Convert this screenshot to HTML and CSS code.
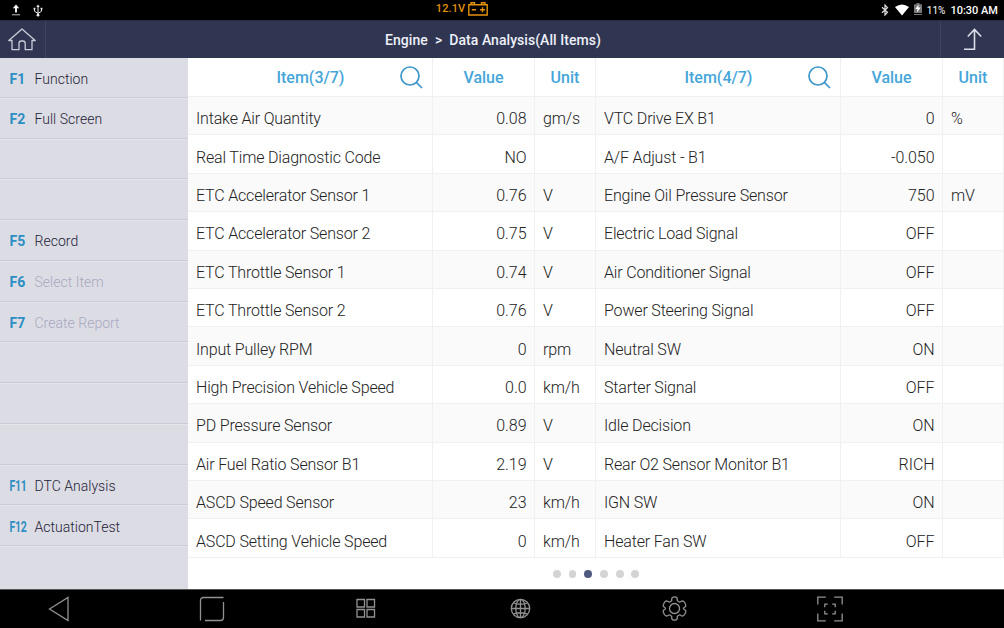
FILE: index.html
```html
<!DOCTYPE html>
<html lang="en">
<head>
<meta charset="utf-8">
<title>Data Analysis</title>
<link rel="stylesheet" href="styles.css">
</head>
<body>
<div class="screen">
  <div class="status">
    <div class="status-left">
      <svg width="10" height="12" viewBox="0 0 10 12"><path d="M5 8.500V3" stroke="#fff" stroke-width="1.800"/><path d="M1.800 4.300 5 .6l3.200 3.700z" fill="#fff"/><path d="M1 10.800h8" stroke="#bbb" stroke-width="1"/></svg>
      <svg width="10" height="13" viewBox="0 0 10 13" fill="none" stroke="#eee"><path d="M5 2v9M1.500 5v2.200L5 9.500l3.500-2.300V5"/><path d="M3.300 3 5 .5 6.700 3zM.6 3.800h1.800v1.800H.6zM7.600 3.800h1.800v1.800H7.600z" fill="#eee" stroke="none"/><circle cx="5" cy="11.200" r="1.400" fill="#eee" stroke="none"/></svg>
    </div>
    <div class="voltage"><span>12.1V</span><svg width="20" height="14" viewBox="0 0 20 14" fill="none" stroke="#e3920b" stroke-width="1.400"><path d="M.8 2.800h18.400v10.200H.8zM3 2.500V.8h3.500v1.700M13.500 2.500V.8H17v1.700M3.700 7.800H8M12 7.800h5M14.500 5.300v5"/></svg></div>
    <div class="status-right">
      <svg width="8" height="12" viewBox="0 0 8 12" fill="none" stroke="#ddd" stroke-width="1.200"><path d="m1 3.200 5.500 5L4 11V1l2.500 2.700L1 8.800"/></svg>
      <svg class="wifi" width="14" height="12" viewBox="0 0 14 12"><path d="M0 3Q7-2.200 14 3L7 11.500z" fill="#fff"/></svg>
      <svg class="battery" width="8" height="12" viewBox="0 0 8 12"><path d="M2.500 0h3v1.200H8V10H0V1.200h2.500zM0 11h8v1H0z" fill="#777"/><path d="M4.600 1.500 1.300 6h2.200L2.900 9.500l3.800-5H4.400z" fill="#fff"/></svg>
      <span class="percent">11%</span><span class="clock">10:30 AM</span>
    </div>
  </div>
  <header class="titlebar">
    <div class="home"><svg width="28" height="23" viewBox="0 0 28 23" fill="none" stroke="#c9ccd9" stroke-width="1.300" stroke-linejoin="round"><path d="M4 12.500H.8L14 1l13.200 11.500H24v9.200h-6.800v-6.400q0-2.300-2.300-2.300h-1.600q-2.300 0-2.300 2.300v6.400H4z"/></svg></div>
    <h1>Engine&nbsp; &gt;&nbsp; Data Analysis(All Items)</h1>
    <div class="up"><svg width="19" height="23" viewBox="0 0 19 23" fill="none" stroke="#dcdee8" stroke-width="1.600"><path d="M1 21.200h10.500V2M4.800 8.500l6.700-7 6.700 7"/></svg></div>
  </header>
  <main class="body">
    <nav class="side">
      <div class="fn"><b>F1</b><span>Function</span></div>
      <div class="fn"><b>F2</b><span>Full Screen</span></div>
      <div class="fn"></div>
      <div class="fn"></div>
      <div class="fn"><b>F5</b><span>Record</span></div>
      <div class="fn off"><b>F6</b><span>Select Item</span></div>
      <div class="fn off"><b>F7</b><span>Create Report</span></div>
      <div class="fn"></div>
      <div class="fn"></div>
      <div class="fn"></div>
      <div class="fn wide"><b>F11</b><span>DTC Analysis</span></div>
      <div class="fn wide"><b>F12</b><span>ActuationTest</span></div>
    </nav>
    <section class="data">
      <div class="row head"><div class="item"><span>Item(3/7)</span><svg width="23" height="23" viewBox="0 0 23 23" fill="none" stroke="#3f97c9" stroke-width="1.700"><circle cx="10" cy="10" r="9"/><path d="m16.300 16.300 5.700 5.700"/></svg></div><div>Value</div><div>Unit</div><div class="item"><span>Item(4/7)</span><svg width="23" height="23" viewBox="0 0 23 23" fill="none" stroke="#3f97c9" stroke-width="1.700"><circle cx="10" cy="10" r="9"/><path d="m16.300 16.300 5.700 5.700"/></svg></div><div>Value</div><div>Unit</div></div>
      <div class="row"><div>Intake Air Quantity</div><div class="val">0.08</div><div>gm/s</div><div>VTC Drive EX B1</div><div class="val">0</div><div>%</div></div>
      <div class="row"><div>Real Time Diagnostic Code</div><div class="val">NO</div><div></div><div>A/F Adjust - B1</div><div class="val">-0.050</div><div></div></div>
      <div class="row"><div>ETC Accelerator Sensor 1</div><div class="val">0.76</div><div>V</div><div>Engine Oil Pressure Sensor</div><div class="val">750</div><div>mV</div></div>
      <div class="row"><div>ETC Accelerator Sensor 2</div><div class="val">0.75</div><div>V</div><div>Electric Load Signal</div><div class="val">OFF</div><div></div></div>
      <div class="row"><div>ETC Throttle Sensor 1</div><div class="val">0.74</div><div>V</div><div>Air Conditioner Signal</div><div class="val">OFF</div><div></div></div>
      <div class="row"><div>ETC Throttle Sensor 2</div><div class="val">0.76</div><div>V</div><div>Power Steering Signal</div><div class="val">OFF</div><div></div></div>
      <div class="row"><div>Input Pulley RPM</div><div class="val">0</div><div>rpm</div><div>Neutral SW</div><div class="val">ON</div><div></div></div>
      <div class="row"><div>High Precision Vehicle Speed</div><div class="val">0.0</div><div>km/h</div><div>Starter Signal</div><div class="val">OFF</div><div></div></div>
      <div class="row"><div>PD Pressure Sensor</div><div class="val">0.89</div><div>V</div><div>Idle Decision</div><div class="val">ON</div><div></div></div>
      <div class="row"><div>Air Fuel Ratio Sensor B1</div><div class="val">2.19</div><div>V</div><div>Rear O2 Sensor Monitor B1</div><div class="val">RICH</div><div></div></div>
      <div class="row"><div>ASCD Speed Sensor</div><div class="val">23</div><div>km/h</div><div>IGN SW</div><div class="val">ON</div><div></div></div>
      <div class="row"><div>ASCD Setting Vehicle Speed</div><div class="val">0</div><div>km/h</div><div>Heater Fan SW</div><div class="val">OFF</div><div></div></div>
      <div class="pager"><i></i><i></i><i class="on"></i><i></i><i></i><i></i></div>
    </section>
  </main>
  <footer class="navbar">
    <svg width="26" height="26" viewBox="0 0 26 26"><path d="M3.500 13 22 1.500v23z"/></svg>
    <svg width="26" height="26" viewBox="0 0 26 26"><path d="M1.500 24.500v-20q0-3 3-3h20M24.500 6v15.500q0 3-3 3H6"/></svg>
    <svg width="26" height="26" viewBox="0 0 26 26"><path d="M4 3.500h7.500V11H4zM14 3.500h7.500V11H14zM4 13.500h7.500V21H4zM14 13.500h7.500V21H14z"/></svg>
    <svg width="26" height="26" viewBox="0 0 26 26"><circle cx="13.500" cy="12.500" r="9.200"/><ellipse cx="13.500" cy="12.500" rx="4.700" ry="9.200"/><path d="M13.500 3.500v18M4.500 12.500h18M6.500 7q7 2.500 14 0M6.500 18q7-2.500 14 0"/></svg>
    <svg width="26" height="26" viewBox="0 0 26 26"><g transform="translate(.5 0)"><circle cx="13" cy="12.500" r="5"/><path d="M10.200 3.300q0-2.500 2.800-2.500t2.800 2.500v1.500l2.400 1.400 1.200-.7q2.300-1.300 3.700 1t1.300 3.600q0 .8-1.700 1.300-1.300 1.100 0 2.200 1.700.5 1.700 1.300 0 1.300-1.300 3.600t-3.700 1l-1.200-.7-2.400 1.400v1.500q0 2.500-2.800 2.500t-2.800-2.500v-1.500l-2.400-1.400-1.200.7q-2.300 1.300-3.700-1t-1.300-3.600q0-.8 1.700-1.300 1.300-1.100 0-2.200-1.700-.5-1.700-1.300 0-1.300 1.300-3.600t3.700-1l1.200.7 2.400-1.400z" stroke-linejoin="round"/></g></svg>
    <svg width="26" height="26" viewBox="0 0 26 26"><path d="M.8 8.500V1.200h8M17.200 1.200h8v7.300M25.200 17.500v7.300h-8M8.800 24.800h-8v-7.300M7.800 11.200v-3h3M15.200 8.200h3v3M18.200 14.800v3h-3M10.800 17.800h-3v-3"/></svg>
  </footer>
</div>
</body>
</html>
```
FILE: styles.css
```css
* { box-sizing: border-box; }
body { margin: 0; font-family: Roboto, "Liberation Sans", sans-serif; background: #000; }
svg { display: block; flex: none; }
.screen { width: 1004px; height: 628px; display: flex; flex-direction: column; overflow: hidden; }

.status { height: 20px; display: grid; grid-template-columns: 1fr auto 1fr; align-items: center; background: #000; color: #fff; }
.status-left { display: flex; align-items: center; gap: 12px; padding-left: 11px; }
.voltage { display: flex; align-items: center; gap: 3px; padding-right: 80px; margin-top: -3px; color: #e3920b; font-size: 11px; font-weight: 500; letter-spacing: .1px; }
.status-right { display: flex; align-items: center; justify-content: flex-end; padding-right: 6px; font-size: 11px; }
.wifi { margin-left: 6px; }
.battery { margin: -2px 5px 0 5px; }
.percent { font-size: 10px; letter-spacing: 0; margin-right: 5px; }
.clock { font-weight: 500; }

.titlebar { height: 38px; display: flex; background: #303651; border-top: 1px solid #252a40; }
.home { width: 46px; padding: 7px 0 0 8px; border-right: 1px solid #3e4460; }
.titlebar h1 { flex: 1; margin: 0; text-align: center; font-size: 14px; line-height: 38px; font-weight: 500; letter-spacing: .05px; color: #eef0fa; }
.up { width: 64px; padding: 7px 0 0 22px; border-left: 1px solid #3e4460; }

.body { height: 531px; display: flex; background: #fff; }
.side { width: 188px; background: #dcdce5; }
.fn { height: 40.78px; display: flex; align-items: center; padding: 2.700px 0 0 9.500px; border-bottom: 1px solid #cbcbd6; box-shadow: 0 1px 0 #e4e4eb; font-size: 14px; font-weight: 300; letter-spacing: .02px; color: #1e2236; }
.fn:first-child { height: 39.75px; }
.fn b { width: 25px; font-weight: 700; color: #2c8fc3; }
.fn.wide b { transform: translateX(-.5px) scaleX(.75); transform-origin: left; letter-spacing: -.3px; }
.fn.off { color: #a9a9bf; }

.data { flex: 1; }
.row { height: 38.42px; display: grid; grid-template-columns: 245px 102px 61px 245px 102px 61px; border-bottom: 1px solid #f0f0f0; font-size: 16px; font-weight: 300; letter-spacing: -.17px; color: #222; background: #fff; white-space: nowrap; }
.row:nth-child(even) { background: #fafafa; }
.row > div { display: flex; align-items: center; padding: 6px 0 0 8px; border-right: 1px solid #f0f0f0; }
.row > .val { justify-content: flex-end; padding: 6px 7.500px 0 0; letter-spacing: -.05px; }
.head { height: 39px; font-weight: 500; letter-spacing: 0; color: #45a6d8; }
.head > div { justify-content: center; padding: 1px 0 0; }
.head > .item { padding: 0 9.500px 0 88.500px; justify-content: space-between; }
.pager { display: flex; gap: 7.900px; padding: 12px 0 0 365px; }
.pager i { width: 7.800px; height: 7.800px; border-radius: 50%; background: #d4d4d4; }
.pager .on { background: #505a80; }

.navbar { height: 39px; display: flex; gap: 127.700px; padding: 5.500px 0 0 46px; border-top: 1px solid #555; background: #000; }
.navbar svg { fill: none; stroke: #929292; stroke-width: 1.300; }
.navbar svg:nth-child(2) { margin: 0 .5px 0 -.5px; }
.navbar svg:last-child { margin-left: 3px; }
```
